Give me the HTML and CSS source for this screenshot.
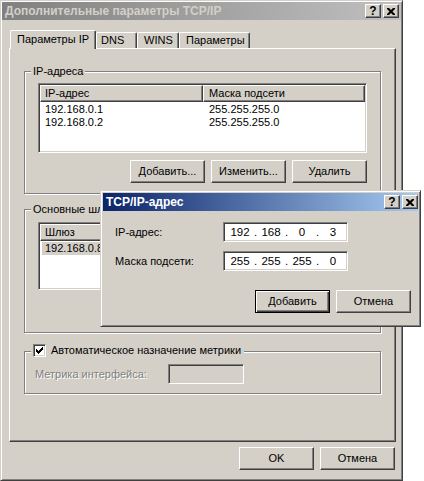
FILE: index.html
```html
<!DOCTYPE html>
<html>
<head>
<meta charset="utf-8">
<title>Дополнительные параметры TCP/IP</title>
<link rel="stylesheet" href="styles.css">
</head>
<body>
<div class="window">
  <div class="titlebar inactive">
    <span class="title">Дополнительные параметры TCP/IP</span>
    <div class="tbtns">
      <span class="tbtn q">?</span>
      <span class="tbtn"><svg width="8" height="7" viewBox="0 0 8 7"><path d="M0 0h2l2 2 2-2h2v1L5.5 3.5 8 6v1H6L4 5 2 7H0V6l2.5-2.5L0 1z" fill="#000"/></svg></span>
    </div>
  </div>
  <div class="tabs">
    <div class="tab sel t1">Параметры IP</div>
    <div class="tab t2">DNS</div>
    <div class="tab t3">WINS</div>
    <div class="tab t4">Параметры</div>
  </div>
  <div class="panel">
    <div class="group g1">
      <span class="legend">IP-адреса</span>
      <div class="list l1">
        <div class="hdr"><span class="hc c1">IP-адрес</span><span class="hc c2">Маска подсети</span></div>
        <div class="rows">
          <div class="row"><span class="c1">192.168.0.1</span><span class="c2">255.255.255.0</span></div>
          <div class="row"><span class="c1">192.168.0.2</span><span class="c2">255.255.255.0</span></div>
        </div>
      </div>
      <div class="btnrow">
        <div class="btn">Добавить...</div>
        <div class="btn">Изменить...</div>
        <div class="btn">Удалить</div>
      </div>
    </div>
    <div class="group g2">
      <span class="legend">Основные шлюзы</span>
      <div class="list l2">
        <div class="hdr"><span class="hc c1">Шлюз</span><span class="hc c2"></span></div>
        <div class="rows">
          <div class="row"><span class="c1"><span class="selitem">192.168.0.8</span></span><span class="c2"></span></div>
        </div>
      </div>
    </div>
    <div class="group g3">
      <span class="legend chk"><span class="checkbox"><svg width="7" height="7" viewBox="0 0 7 7"><path d="M0 2h1v1h1v1h1V3h1V2h1V1h1V0h1v3H6v1H5v1H4v1H3v1H2V6H1V5H0z" fill="#000"/></svg></span><span>Автоматическое назначение метрики</span></span>
      <div class="metric">
        <span class="dis mlabel">Метрика интерфейса:</span>
        <span class="field disfield"></span>
      </div>
    </div>
  </div>
  <div class="footer">
    <div class="btn">OK</div>
    <div class="btn">Отмена</div>
  </div>
</div>

<div class="dialog">
  <div class="titlebar active">
    <span class="title">TCP/IP-адрес</span>
    <div class="tbtns">
      <span class="tbtn q">?</span>
      <span class="tbtn"><svg width="8" height="7" viewBox="0 0 8 7"><path d="M0 0h2l2 2 2-2h2v1L5.5 3.5 8 6v1H6L4 5 2 7H0V6l2.5-2.5L0 1z" fill="#000"/></svg></span>
    </div>
  </div>
  <div class="dbody">
    <div class="drow">
      <span class="dlabel">IP-адрес:</span>
      <div class="field ipfield"><span class="oct">192</span><span class="dot">.</span><span class="oct">168</span><span class="dot">.</span><span class="oct">0</span><span class="dot">.</span><span class="oct">3</span></div>
    </div>
    <div class="drow r2">
      <span class="dlabel">Маска подсети:</span>
      <div class="field ipfield"><span class="oct">255</span><span class="dot">.</span><span class="oct">255</span><span class="dot">.</span><span class="oct">255</span><span class="dot">.</span><span class="oct">0</span></div>
    </div>
    <div class="dbtns">
      <div class="btn default">Добавить</div>
      <div class="btn">Отмена</div>
    </div>
  </div>
</div>
</body>
</html>
```

FILE: styles.css
```css
* { box-sizing: border-box; }
html, body { margin: 0; padding: 0; background: #fff; }
body {
  font-family: "Liberation Sans", Arial, sans-serif;
  font-size: 11px;
  color: #000;
  position: relative;
  width: 424px;
  height: 481px;
  overflow: hidden;
}

.window {
  width: 403px;
  height: 481px;
  background: #d4d0c8;
  border: 1px solid;
  border-color: #d4d0c8 #404040 #404040 #d4d0c8;
  box-shadow: inset 1px 1px #fff, inset -1px -1px #808080;
  padding: 1px;
}

.titlebar {
  height: 18px;
  display: flex;
  align-items: center;
  padding: 0 2px 0 3px;
}
.titlebar.inactive { background: linear-gradient(to right, #808080, #c0c0c0); color: #d4d0c8; }
.titlebar.active { background: linear-gradient(to right, #0a246a, #a6caf0); color: #fff; }
.title { flex: 1; font-weight: bold; font-size: 12px; line-height: 18px; white-space: nowrap; }
.tbtns { display: flex; gap: 2px; }
.tbtn {
  width: 16px;
  height: 14px;
  background: #d4d0c8;
  border: 1px solid;
  border-color: #fff #404040 #404040 #fff;
  box-shadow: inset -1px -1px #808080;
  display: flex;
  align-items: center;
  justify-content: center;
  color: #000;
}
.tbtn svg { display: block; margin-left: -1px; }
.tbtn.q { font-weight: bold; font-size: 12px; line-height: 12px; padding-bottom: 1px; }

/* tabs */
.tabs {
  display: flex;
  height: 19px;
  margin-top: 10px;
  margin-bottom: -1px;
  padding-left: 8px;
  align-items: flex-start;
}
.tab {
  height: 16px;
  margin-top: 2px;
  border: 1px solid;
  border-bottom: none;
  border-color: #fff #404040 #404040 #fff;
  box-shadow: inset -1px 0 #808080;
  border-radius: 2px 2px 0 0;
  line-height: 15px;
  padding-left: 6px;
  white-space: nowrap;
  background: #d4d0c8;
}
.tab.sel {
  height: 19px;
  margin-top: 0;
  position: relative;
  z-index: 1;
  line-height: 17px;
}
.t1 { width: 86px; }
.t2 { width: 41px; padding-left: 4px; }
.t3 { width: 42px; padding-left: 6px; }
.t4 { width: 71px; padding-left: 6px; }

.panel {
  margin-left: 7px;
  width: 387px;
  height: 394px;
  border: 1px solid;
  border-color: #fff #404040 #404040 #fff;
  box-shadow: inset -1px -1px #808080;
}

/* group boxes */
.group {
  position: relative;
  margin-left: 14px;
  width: 357px;
  border: 1px solid #808080;
  box-shadow: inset 1px 1px #fff, 1px 1px #fff;
}
.g1 { margin-top: 22px; height: 123px; }
.g2 { margin-top: 15px; height: 124px; }
.g3 { margin-top: 18px; height: 43px; }
.legend {
  position: absolute;
  left: 6px;
  top: -7px;
  padding: 0 2px;
  line-height: 13px;
  background: #d4d0c8;
  white-space: nowrap;
}
.legend.chk { display: flex; align-items: center; gap: 5px; top: -8px; padding-right: 3px; }

.checkbox {
  width: 13px;
  height: 13px;
  background: #fff;
  border: 1px solid;
  border-color: #808080 #fff #fff #808080;
  box-shadow: inset 1px 1px #404040, inset -1px -1px #d4d0c8;
  display: flex;
  align-items: center;
  justify-content: center;
}
.checkbox svg { display: block; }

/* list views */
.list {
  margin-left: 13px;
  width: 329px;
  background: #fff;
  border: 1px solid;
  border-color: #808080 #fff #fff #808080;
  box-shadow: inset 1px 1px #404040, inset -1px -1px #d4d0c8;
  padding: 1px;
}
.l1 { margin-top: 11px; height: 70px; }
.l2 { margin-top: 12px; height: 68px; }
.hdr { display: flex; height: 17px; }
.hc {
  background: #d4d0c8;
  border: 1px solid;
  border-color: #fff #404040 #404040 #fff;
  box-shadow: inset -1px -1px #808080;
  line-height: 14px;
  white-space: nowrap;
  overflow: hidden;
}
.hdr .c1 { width: 163px; padding-left: 4px; }
.hdr .c2 { flex: 1; padding-left: 5px; }
.rows { padding-top: 1px; }
.row { display: flex; height: 13px; line-height: 13px; white-space: nowrap; }
.row .c1 { width: 163px; padding-left: 5px; }
.row .c2 { flex: 1; padding-left: 6px; }
.selitem { background: #d4d0c8; margin-left: -3px; padding: 0 3px; display: inline-block; height: 13px; }

/* buttons */
.btnrow {
  display: flex;
  justify-content: flex-end;
  gap: 6px;
  margin-left: 13px;
  width: 329px;
  margin-top: 7px;
}
.btn {
  width: 75px;
  height: 23px;
  background: #d4d0c8;
  border: 1px solid;
  border-color: #fff #404040 #404040 #fff;
  box-shadow: inset -1px -1px #808080;
  text-align: center;
  line-height: 20px;
  white-space: nowrap;
}
.btn.default {
  border-color: #000;
  box-shadow: inset 1px 1px #fff, inset -1px -1px #404040, inset -2px -2px #808080;
}

/* metric row */
.metric { display: flex; align-items: center; margin-top: 12px; padding-left: 10px; }
.mlabel { width: 133px; }
.dis { color: #808080; text-shadow: 1px 1px #fff; }
.field {
  border: 1px solid;
  border-color: #808080 #fff #fff #808080;
  box-shadow: inset 1px 1px #404040, inset -1px -1px #d4d0c8;
  height: 20px;
}
.disfield { width: 76px; background: #d4d0c8; }

.footer {
  display: flex;
  justify-content: flex-end;
  gap: 6px;
  margin-top: 5px;
  padding-right: 6px;
}

/* child dialog (window overlapping the main one) */
.dialog {
  position: absolute;
  left: 100px;
  top: 190px;
  width: 321px;
  height: 137px;
  background: #d4d0c8;
  border: 1px solid;
  border-color: #d4d0c8 #404040 #404040 #d4d0c8;
  box-shadow: inset 1px 1px #fff, inset -1px -1px #808080;
  padding: 2px;
}
.dialog .titlebar { padding-right: 0; }
.dbody { padding: 11px 7px 0 12px; }
.drow { display: flex; align-items: center; height: 20px; }
.drow.r2 { margin-top: 9px; }
.dlabel { width: 108px; white-space: nowrap; }
.ipfield {
  width: 125px;
  background: #fff;
  display: flex;
  align-items: center;
  padding-left: 5px;
  font-size: 11.5px;
  line-height: 16px;
}
.oct { width: 22px; text-align: center; }
.dot { width: 9px; text-align: center; }
.dbtns { display: flex; justify-content: flex-end; gap: 6px; margin-top: 19px; }
```
